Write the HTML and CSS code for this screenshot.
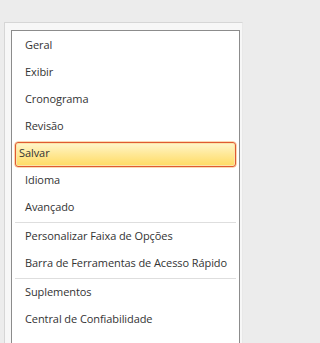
FILE: index.html
```html
<!DOCTYPE html>
<html lang="pt-BR">
<head>
<meta charset="utf-8">
<title>Opções</title>
<link rel="stylesheet" href="styles.css">
</head>
<body>
<div class="page">
  <div class="topband"></div>
  <div class="panel">
    <ul class="list">
      <li class="item">Geral</li>
      <li class="item">Exibir</li>
      <li class="item">Cronograma</li>
      <li class="item">Revisão</li>
      <li class="item selected">Salvar</li>
      <li class="item">Idioma</li>
      <li class="item">Avançado</li>
      <li class="sep"></li>
      <li class="item">Personalizar Faixa de Opções</li>
      <li class="item">Barra de Ferramentas de Acesso Rápido</li>
      <li class="sep"></li>
      <li class="item">Suplementos</li>
      <li class="item">Central de Confiabilidade</li>
    </ul>
  </div>
</div>
</body>
</html>
```
FILE: styles.css
```css
html, body {
  margin: 0;
  padding: 0;
  background: #ececec;
}
.page {
  width: 243px;
  height: 343px;
  overflow: hidden;
  display: flex;
  flex-direction: column;
}
.topband {
  height: 22px;
  flex: none;
  background: #ececec;
}
.panel {
  flex: 1;
  margin-left: 4px;
  border-left: 1px solid #d6d6d6;
  border-top: 1px solid #d6d6d6;
  border-right: 1px solid #e8e8e8;
  background: #f7f7f7;
  padding: 7px 2px 0 6px;
}
.list {
  list-style: none;
  margin: 0;
  padding: 3px 0 40px;
  background: #ffffff;
  border: 1px solid #8c8c8c;
  font-family: "Open Sans", "Noto Sans", sans-serif;
  font-size: 11px;
  letter-spacing: -0.08px;
  color: #333333;
}
.item {
  box-sizing: border-box;
  height: 25px;
  line-height: 21px;
  margin: 0 3px 2px;
  padding: 0 6px 4px 10px;
  white-space: nowrap;
}
.item.selected {
  padding-left: 3px;
  border: 1px solid #e05a32;
  border-radius: 3px;
  line-height: 19px;
  background: linear-gradient(#fff6cc, #ffe99a 45%, #ffdb63);
  box-shadow: inset 0 0 0 1px #fbe6a8, 0 0 0 0.5px #f5b56a;
}
.sep {
  height: 1px;
  margin: -1px 3px 2px;
  background: #dedede;
}
```
